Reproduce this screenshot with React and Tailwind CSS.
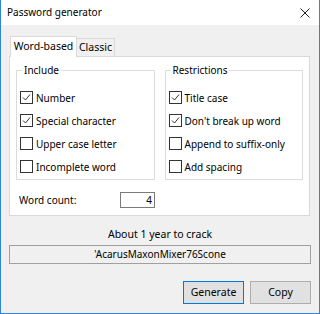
import React from 'react';

const font = { fontFamily: '"Noto Sans", Lato, sans-serif' };

function Check({ checked, label }) {
  return (
    <div className="flex items-center h-[13px] whitespace-nowrap">
      <div className="w-[13px] h-[13px] shrink-0 border border-[#333333] bg-white flex items-center justify-center">
        {checked && (
          <svg width="9" height="9" viewBox="0 0 9 9">
            <path d="M1 4.5 L3.5 7 L8 1.5" fill="none" stroke="#333333" strokeWidth="1" />
          </svg>
        )}
      </div>
      <span className="ml-[3px] text-[10px] text-black leading-none">{label}</span>
    </div>
  );
}

function Group({ title, items }) {
  return (
    <fieldset className="border border-[#dcdcdc] w-[139px] h-[117px]">
      <legend className="ml-[5px] px-[2px] text-[10px] leading-[14px] text-black">{title}</legend>
      <div className="flex flex-col gap-[10px] pl-[3px] pt-[14px]">
        {items.map((it) => (
          <Check key={it.label} checked={it.checked} label={it.label} />
        ))}
      </div>
    </fieldset>
  );
}

export default function App() {
  return (
    <div
      className="w-[320px] h-[314px] bg-[#f0f0f0] border-x border-b border-[#2f86d8] flex flex-col text-black"
      style={font}
    >
      {/* Title bar */}
      <div className="h-[25px] bg-white flex items-center justify-between pl-[6px] pr-[9px] shrink-0">
        <span className="text-[10px]">Password generator</span>
        <svg width="10" height="10" viewBox="0 0 10 10">
          <path d="M0.5 0.5 L9.5 9.5 M9.5 0.5 L0.5 9.5" stroke="#222" strokeWidth="1" />
        </svg>
      </div>

      <div className="pl-[8px] pt-[11px] flex flex-col">
        {/* Tabs */}
        <div className="flex items-end h-[20px] pl-[1px] whitespace-nowrap">
          <div className="relative z-10 w-[67px] h-[21px] -mb-px bg-white border-x border-t border-[#d9d9d9] flex items-center justify-center text-[10.5px]">
            Word-based
          </div>
          <div className="w-[38px] h-[18px] bg-[#f0f0f0] border-r border-t border-[#d9d9d9] flex items-center justify-center text-[10.5px]">
            Classic
          </div>
        </div>

        {/* Panel */}
        <div className="w-[301px] h-[160px] bg-white border border-[#d9d9d9] px-[6px] pt-[6px]">
          <div className="flex gap-[10px]">
            <Group
              title="Include"
              items={[
                { label: 'Number', checked: true },
                { label: 'Special character', checked: true },
                { label: 'Upper case letter', checked: false },
                { label: 'Incomplete word', checked: false },
              ]}
            />
            <Group
              title="Restrictions"
              items={[
                { label: 'Title case', checked: true },
                { label: "Don't break up word", checked: true },
                { label: 'Append to suffix-only', checked: false },
                { label: 'Add spacing', checked: false },
              ]}
            />
          </div>
          <div className="flex items-center mt-[12px] pl-[3px]">
            <span className="text-[10px] w-[101px]">Word count:</span>
            <div className="w-[35px] h-[16px] border border-[#7a7a7a] bg-white text-[10px] leading-[14px] text-right pr-[2px]">
              4
            </div>
          </div>
        </div>

        <div className="w-[302px] text-center text-[10.5px] mt-[10px] leading-[16px]">About 1 year to crack</div>
        <div className="w-[302px] h-[19px] mt-[3px] border border-[#a0a0a0] bg-[#f0f0f0] flex items-center justify-center text-[10px]">
          'AcarusMaxonMixer76Scone
        </div>

        <div className="flex justify-end gap-[6px] w-[302px] mt-[17px]">
          <button className="w-[61px] h-[23px] border border-[#0078d7] bg-[#e1e1e1] text-[10.5px]">Generate</button>
          <button className="w-[61px] h-[23px] border border-[#adadad] bg-[#e1e1e1] text-[10.5px]">Copy</button>
        </div>
      </div>
    </div>
  );
}
